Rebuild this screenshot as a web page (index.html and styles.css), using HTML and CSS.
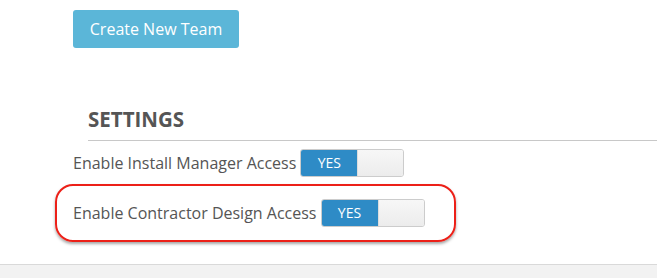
FILE: index.html
```html
<!DOCTYPE html>
<html>
<head>
<meta charset="utf-8">
<link rel="stylesheet" href="styles.css">
</head>
<body>
<div class="page">
  <div class="content">
    <button class="btn-create">Create New Team</button>
    <div class="settings">
      <h2 class="settings-title">SETTINGS</h2>
      <div class="row">
        <span class="label">Enable Install Manager Access</span>
        <span class="toggle"><span class="toggle-on">YES</span><span class="toggle-off"></span></span>
      </div>
      <div class="row highlighted">
        <span class="label">Enable Contractor Design Access</span>
        <span class="toggle"><span class="toggle-on">YES</span><span class="toggle-off"></span></span>
      </div>
    </div>
  </div>
  <div class="footer"></div>
</div>
</body>
</html>
```
FILE: styles.css
```css
html, body {
  margin: 0;
  padding: 0;
  background: #fff;
}
body {
  font-family: "Open Sans", "Liberation Sans", sans-serif;
  color: #555;
}
.page {
  width: 657px;
  height: 278px;
  display: flex;
  flex-direction: column;
  overflow: hidden;
}
.content {
  flex: 1;
  padding: 10px 0 0 73px;
}
.btn-create {
  display: block;
  width: 166px;
  height: 38px;
  background: #5bb6d8;
  border: none;
  border-radius: 3px;
  color: #fff;
  font-family: "Open Sans", "Liberation Sans", sans-serif;
  font-size: 16px;
  padding: 0;
  margin: 0;
}
.settings {
  margin-top: 57px;
}
.settings-title {
  margin: 0 0 0 15px;
  font-size: 20.5px;
  font-weight: 700;
  color: #555;
  line-height: 28px;
  padding-bottom: 7px;
  border-bottom: 1px solid #c8c8c8;
}
.row {
  display: flex;
  align-items: center;
  gap: 4px;
  font-size: 16px;
  margin-top: 8px;
}
.label {
  line-height: 28px;
}
.toggle {
  display: flex;
  box-sizing: border-box;
  width: 104px;
  height: 28px;
  border: 1px solid #ccc;
  border-radius: 3px;
  overflow: hidden;
}
.toggle-on {
  width: 56px;
  background: #2e8bc6;
  color: #fff;
  font-size: 14px;
  text-align: center;
  line-height: 26px;
}
.toggle-off {
  flex: 1;
  background: linear-gradient(#f7f7f7, #ececec);
  border-left: 1px solid #ddd;
}
.highlighted {
  position: relative;
  margin-top: 22px;
}
.highlighted::before {
  content: "";
  position: absolute;
  left: -18px;
  top: -15px;
  width: 397px;
  height: 54px;
  border: 2.5px solid #ec2018;
  border-radius: 18px;
  box-shadow: 0 2px 3px rgba(0,0,0,0.35);
  pointer-events: none;
}
.footer {
  height: 13px;
  background: #f2f2f2;
  border-top: 1px solid #d9d9d9;
}
```
